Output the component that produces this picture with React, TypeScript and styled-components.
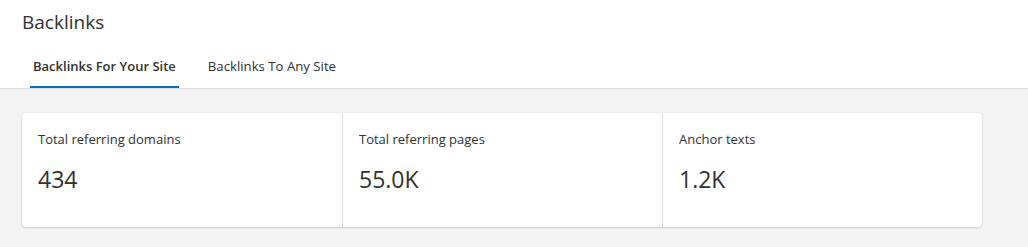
import React from 'react';
import styled, { createGlobalStyle } from 'styled-components';

const GlobalStyle = createGlobalStyle`
  html, body {
    margin: 0;
    padding: 0;
    background: #f3f3f3;
    font-family: "Open Sans", "Noto Sans", sans-serif;
    color: #323130;
  }
`;

const Header = styled.header`
  background: #ffffff;
  padding: 8px 22px 0;
  border-bottom: 1px solid #e0e0e0;
`;

const Title = styled.h1`
  margin: 0;
  font-size: 19px;
  font-weight: 400;
  line-height: 28px;
  color: #323130;
`;

const Tabs = styled.nav`
  display: flex;
  gap: 26px;
  margin-top: 8px;
  padding-left: 8px;
`;

const Tab = styled.button<{ $active?: boolean }>`
  height: 44px;
  padding: 2px 3px 0;
  border: none;
  background: none;
  font-family: inherit;
  font-size: ${(p) => (p.$active ? '13px' : '13.2px')};
  font-weight: ${(p) => (p.$active ? 600 : 400)};
  color: #323130;
  border-bottom: 2px solid ${(p) => (p.$active ? '#0f6cbd' : 'transparent')};
  cursor: pointer;
`;

const Content = styled.main`
  padding: 24px 46px 20px 22px;
`;

const Card = styled.section`
  display: grid;
  grid-template-columns: repeat(3, 1fr);
  background: #ffffff;
  border-radius: 4px;
  box-shadow: 0 1px 2px rgba(0, 0, 0, 0.14), 0 0 2px rgba(0, 0, 0, 0.08);
`;

const Stat = styled.div`
  padding: 16px 16px 32px;
  & + & {
    border-left: 1px solid #e1dfdd;
  }
`;

const Label = styled.div`
  font-size: 13px;
  line-height: 20px;
`;

const Value = styled.div`
  margin-top: 14px;
  font-size: 23px;
  line-height: 32px;
`;

const stats = [
  { label: 'Total referring domains', value: '434' },
  { label: 'Total referring pages', value: '55.0K' },
  { label: 'Anchor texts', value: '1.2K' },
];

export default function App() {
  return (
    <>
      <GlobalStyle />
      <Header>
        <Title>Backlinks</Title>
        <Tabs>
          <Tab $active>Backlinks For Your Site</Tab>
          <Tab>Backlinks To Any Site</Tab>
        </Tabs>
      </Header>
      <Content>
        <Card>
          {stats.map((s) => (
            <Stat key={s.label}>
              <Label>{s.label}</Label>
              <Value>{s.value}</Value>
            </Stat>
          ))}
        </Card>
      </Content>
    </>
  );
}
